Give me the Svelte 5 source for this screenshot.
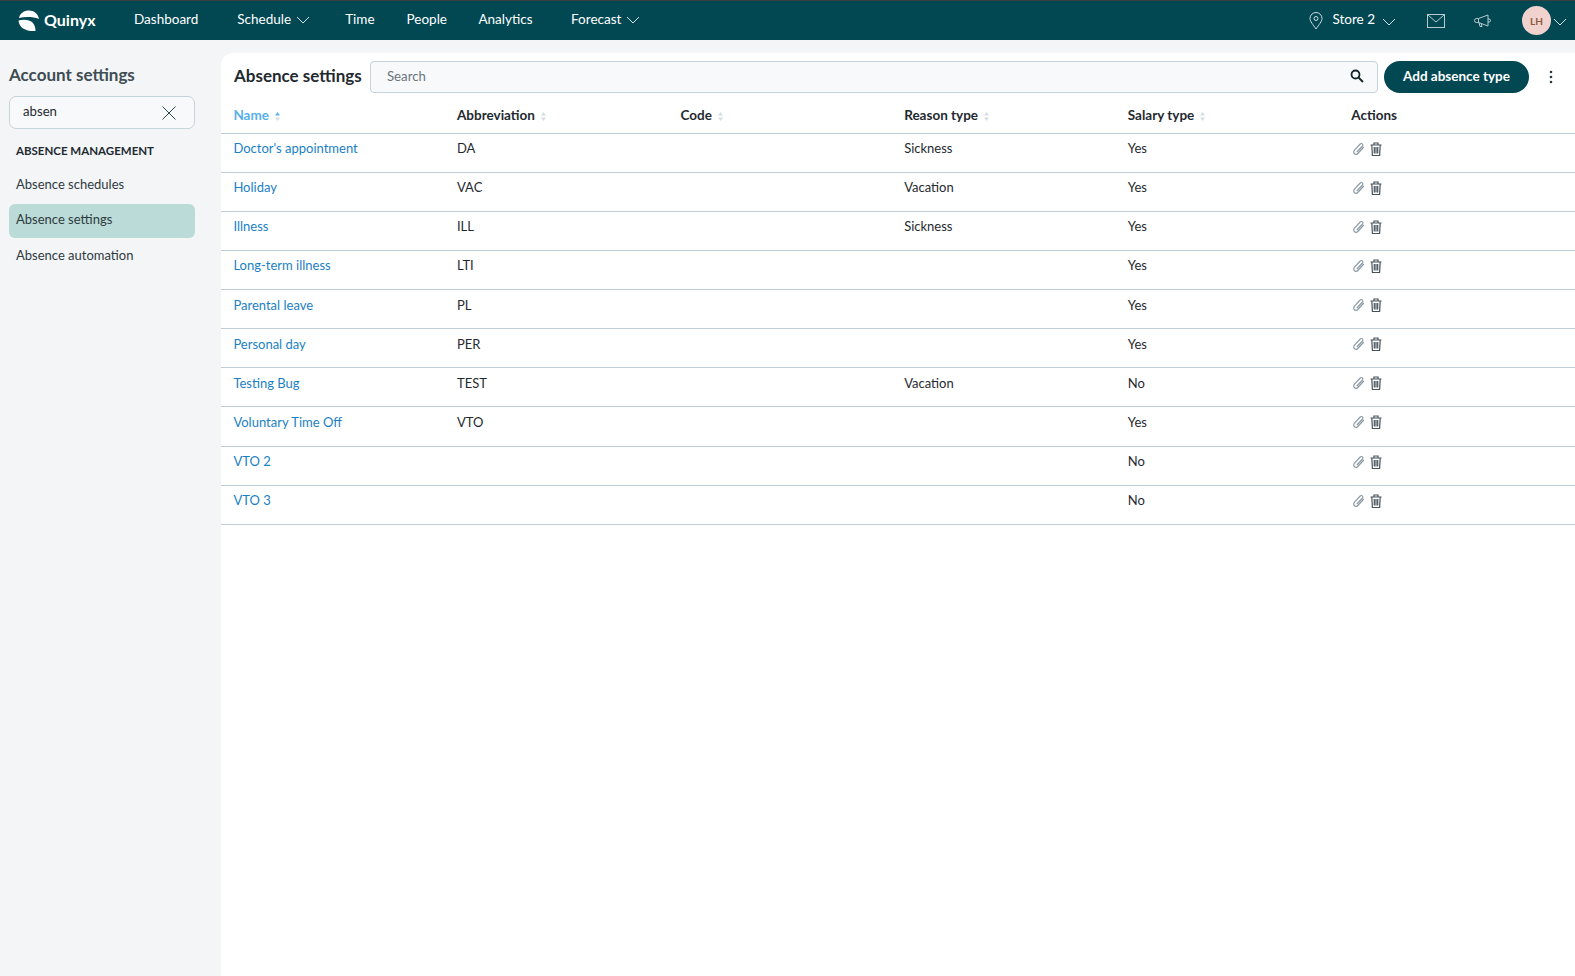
<script lang="ts">
  const nav = [
    { label: "Dashboard", caret: false, gap: 39 },
    { label: "Schedule", caret: true, gap: 35 },
    { label: "Time", caret: false, gap: 32 },
    { label: "People", caret: false, gap: 31.5 },
    { label: "Analytics", caret: false, gap: 38.5 },
    { label: "Forecast", caret: true, gap: 0 },
  ];
  const columns = ["Name", "Abbreviation", "Code", "Reason type", "Salary type"];
  const rows = [
    ["Doctor's appointment", "DA", "", "Sickness", "Yes"],
    ["Holiday", "VAC", "", "Vacation", "Yes"],
    ["Illness", "ILL", "", "Sickness", "Yes"],
    ["Long-term illness", "LTI", "", "", "Yes"],
    ["Parental leave", "PL", "", "", "Yes"],
    ["Personal day", "PER", "", "", "Yes"],
    ["Testing Bug", "TEST", "", "Vacation", "No"],
    ["Voluntary Time Off", "VTO", "", "", "Yes"],
    ["VTO 2", "", "", "", "No"],
    ["VTO 3", "", "", "", "No"],
  ];
  const links = ["Absence schedules", "Absence settings", "Absence automation"];
</script>

{#snippet caret()}
  <svg class="caret" width="14" height="8" viewBox="0 0 14 8"><path d="M1 1l6 6 6-6" fill="none" stroke="currentColor" stroke-width="1"/></svg>
{/snippet}

<div class="page">
  <header class="topbar">
    <div class="logo">
      <svg width="22" height="22" viewBox="0 0 22 22">
        <path d="M1 8C2 3 6 .5 11 .5c5 0 9 3 10 8.500C15 6.500 7 6.500 1 8z" fill="#fff"/>
        <path d="M.5 10.500c6-1.500 11-.5 14 2 2 2 3 5 3 8.500C8 21.500 1 18 .5 10.500z" fill="#fff"/>
      </svg>
      <span>Quinyx</span>
    </div>
    <nav class="nav">
      {#each nav as item}
        <span class="nav-item" style="margin-right: {item.gap}px">{item.label}{#if item.caret}{@render caret()}{/if}</span>
      {/each}
    </nav>
    <div class="top-right">
      <span class="store">
        <svg width="14" height="18" viewBox="0 0 14 18" fill="none" stroke="#cfdcdf" stroke-width="1"><path d="M7 17C4 12.500 1 9.500 1 6.500a6 6 0 0 1 12 0C13 9.500 10 12.500 7 17z"/><circle cx="7" cy="6.500" r="2"/></svg>
        <span class="store-name">Store 2</span>
        {@render caret()}
      </span>
      <svg class="mail" width="18" height="14" viewBox="0 0 18 14" fill="none" stroke="#b9cbcf" stroke-width="1"><rect x=".5" y=".5" width="17" height="13"/><path d="M1 1l8 7 8-7"/></svg>
      <svg class="horn" width="17" height="14" viewBox="0 0 17 14" fill="none" stroke="#b9cbcf" stroke-width="1"><path d="M4.500 4.500L14 1v11L4.500 8.500zM4.500 4.500H2.500a2 2 0 0 0 0 4h2M14 5h1a1.500 1.500 0 0 1 0 3h-1M5 8.500l1 4h2l-.8-3"/></svg>
      <span class="avatar">LH</span>
      {@render caret()}
    </div>
  </header>

  <div class="body">
    <aside class="sidebar">
      <h2>Account settings</h2>
      <div class="filter">
        <span>absen</span>
        <svg width="14" height="14" viewBox="0 0 14 14"><path d="M.5.500l13 13M13.500.5l-13 13" stroke="#2d4a52" stroke-width="1" fill="none"/></svg>
      </div>
      <div class="group">Absence management</div>
      <ul>
        {#each links as link, i}
          <li class:active={i === 1}>{link}</li>
        {/each}
      </ul>
    </aside>

    <main class="panel">
      <div class="toolbar">
        <h1>Absence settings</h1>
        <div class="search">
          <span>Search</span>
          <svg width="14" height="14" viewBox="0 0 14 14" fill="none" stroke="#10262c" stroke-width="1.800"><circle cx="5.500" cy="5.500" r="4"/><path d="M8.500 8.500l4.500 4.500"/></svg>
        </div>
        <button class="add">Add absence type</button>
        <svg class="more" width="4" height="14" viewBox="0 0 4 14" fill="#2c3a40"><circle cx="2" cy="2" r="1.300"/><circle cx="2" cy="7" r="1.300"/><circle cx="2" cy="12" r="1.300"/></svg>
      </div>

      <div class="row head">
        {#each columns as col, i}
          <div class="cell" class:sorted={i === 0}>
            {col}
            <svg class="sort" width="5" height="9" viewBox="0 0 5 9"><path d="M2.500 0L5 3.500H0z" fill={i === 0 ? "#5db5ea" : "#d5dde2"}/><path d="M2.500 9L0 5.500h5z" fill="#d5dde2"/></svg>
          </div>
        {/each}
        <div class="cell">Actions</div>
      </div>

      {#each rows as row}
        <div class="row">
          {#each row as value, i}
            <div class="cell" class:link={i === 0}>{value}</div>
          {/each}
          <div class="cell actions">
            <svg width="13" height="14" viewBox="0 0 13 14" fill="none" stroke="#8c9ba6" stroke-width="1.200"><path d="M11.800 5L5.800 11.500a2.300 2.300 0 0 1-3.500-3.100L8.200 2a1.500 1.500 0 0 1 2.300 2L4.800 10"/></svg>
            <svg width="12" height="14" viewBox="0 0 12 14" fill="none" stroke="#47535a" stroke-width="1.200"><path d="M.5 3h11M4 3V1h4v2M1.800 3l.6 10.500h7.200L10.200 3M4.300 5v6.500M6 5v6.500M7.700 5v6.500"/></svg>
          </div>
        </div>
      {/each}
    </main>
  </div>
</div>

<style>
  :global(body) {
    margin: 0;
    background: #f3f5f7;
    font-family: Lato, "Noto Sans", sans-serif;
    color: #1f2a30;
  }
  .page {
    height: 976px;
    display: flex;
    flex-direction: column;
    overflow: hidden;
  }
  .topbar {
    height: 39px;
    flex: none;
    border-top: 1px solid #3a3f42;
    background: #014852;
    color: #fff;
    display: flex;
    align-items: center;
    font-size: 13.500px;
  }
  .logo {
    display: flex;
    align-items: center;
    gap: 4px;
    width: 134px;
    padding-left: 18px;
    box-sizing: border-box;
    font-size: 16px;
    font-weight: 700;
  }
  .logo span, .nav { margin-bottom: 3px; }
  .nav { display: flex; }
  .nav-item { display: flex; align-items: center; gap: 5px; }
  .caret { color: #d7e2e4; margin-top: 2px; }
  .top-right {
    margin-left: auto;
    display: flex;
    align-items: center;
    padding-right: 8px;
  }
  .store { display: flex; align-items: center; }
  .store-name { margin: 0 7px 3px 9px; }
  .mail { margin-left: 31px; }
  .horn { margin-left: 29px; }
  .avatar {
    width: 29px;
    height: 29px;
    margin: 0 2px 0 31px;
    border-radius: 50%;
    background: #f1d2cf;
    color: #8c5a3f;
    font-size: 10px;
    font-weight: 700;
    display: flex;
    align-items: center;
    justify-content: center;
  }
  .body { flex: 1; display: flex; min-height: 0; }
  .sidebar {
    width: 221px;
    flex: none;
    box-sizing: border-box;
    padding: 24px 26px 0 9px;
  }
  h2 {
    margin: 0 0 11px;
    font-size: 17px;
    line-height: 21px;
    font-weight: 700;
    color: #3e4c53;
  }
  .filter {
    height: 33px;
    box-sizing: border-box;
    border: 1px solid #c5d3da;
    border-radius: 7px;
    background: #f8f9fa;
    padding: 0 18px 3px 13px;
    display: flex;
    align-items: center;
    justify-content: space-between;
    font-size: 13.200px;
  }
  .filter svg { margin-top: 3px; }
  .group {
    margin: 14px 0 10px 7px;
    font-size: 11.500px;
    line-height: 15px;
    font-weight: 700;
    text-transform: uppercase;
    color: #1f2a30;
  }
  ul { list-style: none; margin: 0; padding: 0; }
  li {
    height: 34px;
    box-sizing: border-box;
    margin-bottom: 1.500px;
    border-radius: 6px;
    padding: 0 7px 3px;
    display: flex;
    align-items: center;
    font-size: 13px;
    color: #2f3a40;
  }
  li.active { background: #badbd7; }
  .panel {
    flex: 1;
    min-width: 0;
    margin-top: 13px;
    background: #fff;
    border-top-left-radius: 12px;
  }
  .toolbar {
    height: 47px;
    display: flex;
    align-items: center;
    padding: 0 22px 0 13px;
    box-sizing: border-box;
  }
  h1 {
    margin: 0 0 2px;
    width: 136px;
    flex: none;
    font-size: 17px;
    font-weight: 700;
    white-space: nowrap;
  }
  .search {
    flex: 1;
    height: 32px;
    box-sizing: border-box;
    border: 1px solid #c5d3da;
    border-radius: 4px;
    background: #f8f9fa;
    padding: 0 13px 2px 16px;
    display: flex;
    align-items: center;
    justify-content: space-between;
    font-size: 13.200px;
    color: #68757c;
  }
  .add {
    margin: 0 20px 0 6px;
    width: 145px;
    height: 32px;
    border: 0;
    padding-bottom: 3px;
    border-radius: 16px;
    background: #014852;
    color: #fff;
    font: 700 13.500px Lato, sans-serif;
  }
  .row {
    height: 39.130px;
    box-sizing: border-box;
    display: grid;
    grid-template-columns: repeat(6, 223.600px);
    padding-left: 12.400px;
    border-bottom: 1px solid #c0ced6;
    font-size: 13px;
  }
  .row.head {
    height: 33.500px;
    font-size: 13.500px;
    font-weight: 700;
    padding-top: 6px;
  }
  .cell { padding-top: 5.600px; line-height: 18px; }
  .head .cell { padding-top: 0; display: flex; align-items: flex-start; gap: 6px; }
  .sort { margin-top: 6px; }
  .sorted { color: #56b0ea; }
  .link { color: #1b7fc4; }
  .cell.actions {
    display: flex;
    align-items: flex-start;
    gap: 5px;
    padding: 8px 0 0 1px;
  }
</style>
